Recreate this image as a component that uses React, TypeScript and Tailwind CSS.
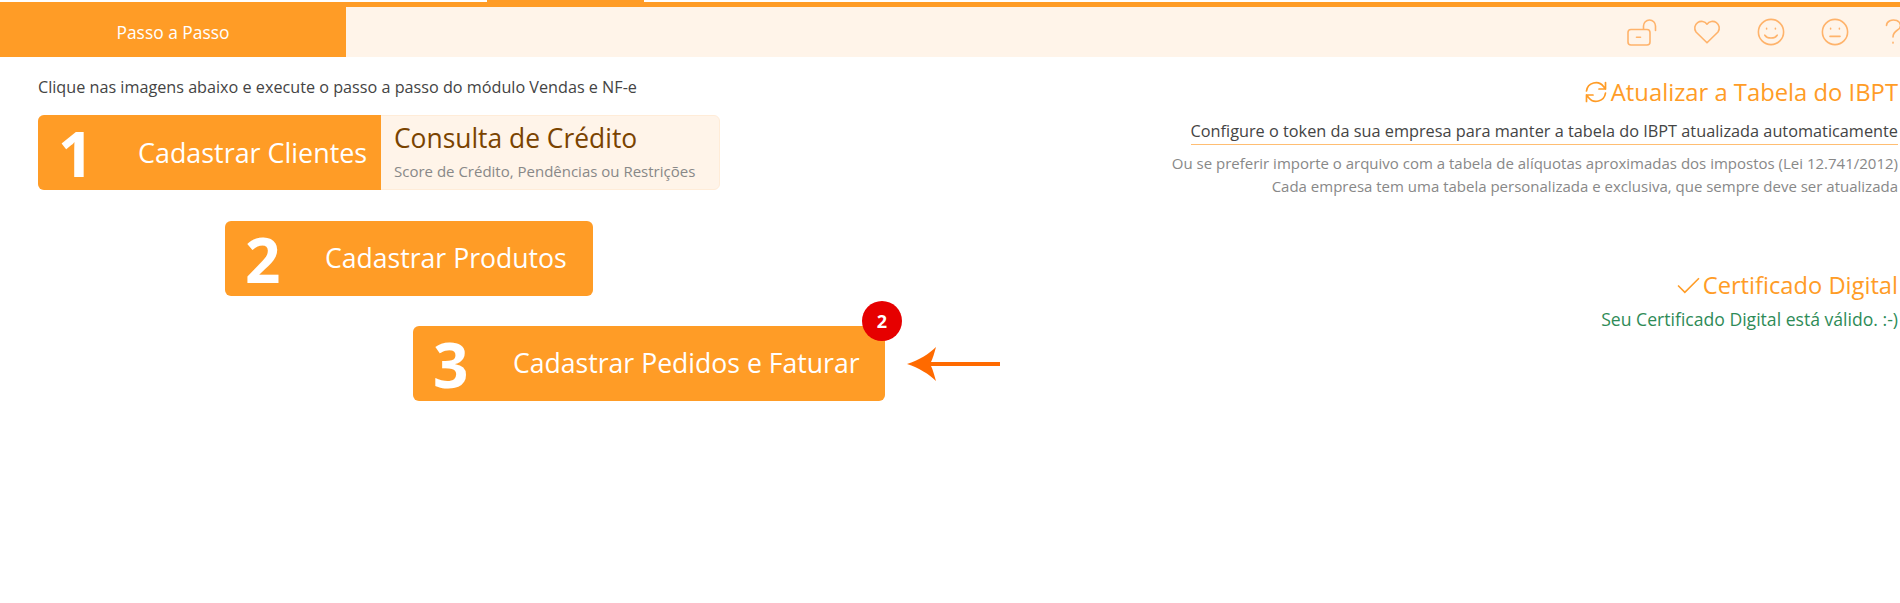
import React from "react";

function Step({ n, label, ml, width }: { n: string; label: string; ml: string; width: string }) {
  return (
    <div className={`relative flex h-[75px] items-center rounded-[6px] bg-[#ff9c26] text-white ${ml} ${width}`}>
      <span className="w-[100px] pl-[20px] text-[62px] font-bold leading-none">{n}</span>
      <span className="whitespace-nowrap text-[26.6px] font-medium leading-none">{label}</span>
    </div>
  );
}

const Stroke = { fill: "none", stroke: "#ffb36b", strokeWidth: 1.6, strokeLinecap: "round" as const, strokeLinejoin: "round" as const };

export default function App() {
  return (
    <div className="min-h-[603px] overflow-hidden bg-white font-['Open_Sans',sans-serif]">
      <div className="flex h-[7px] flex-col">
        <div className="flex h-[2px] bg-white">
          <div className="ml-[487px] h-[2px] w-[157px] bg-[#ff9c26]" />
        </div>
        <div className="h-[5px] bg-[#ff9c26]" />
      </div>
      <div className="flex h-[50px] items-center bg-[#fff4e9]">
        <div className="flex h-full w-[346px] items-center justify-center bg-[#ff9c26] text-[17.4px] text-white">Passo a Passo</div>
        <div className="ml-auto flex items-center gap-[36px]">
          <svg width="30" height="27" viewBox="0 0 30 27" {...Stroke}>
            <rect x="1" y="10.5" width="22" height="15.5" rx="3" />
            <path d="M9.5 18.3h4" />
            <path d="M16.5 10V7a6 6 0 0 1 12 0v4.5" />
          </svg>
          <svg width="28" height="24" viewBox="0 0 28 24" {...Stroke}>
            <path d="M14 22.8 3 12A6.6 6.6 0 0 1 14 4.2 6.6 6.6 0 0 1 25 12Z" />
          </svg>
          <svg width="28" height="28" viewBox="0 0 28 28" {...Stroke}>
            <circle cx="14" cy="14" r="12.6" />
            <path d="M9.6 10.4v.6M18.4 10.4v.6M7.8 17.2c2.8 3.8 9.6 3.8 12.4 0" />
          </svg>
          <svg width="28" height="28" viewBox="0 0 28 28" {...Stroke}>
            <circle cx="14" cy="14" r="12.6" />
            <path d="M9.6 10.4v.6M18.4 10.4v.6M9 18.4h10" />
          </svg>
          <svg width="15" height="26" viewBox="0 0 15 26" {...Stroke}>
            <path d="M1.5 6.5a7 5.5 0 1 1 11 4.5C9.5 13 8 14.5 8 18M8 23.3v.8" />
          </svg>
        </div>
      </div>

      <div className="flex justify-between">
        <div className="pl-[38px]">
          <p className="mt-[20px] whitespace-nowrap text-[16.2px] leading-[20px] text-[#444]">Clique nas imagens abaixo e execute o passo a passo do módulo Vendas e NF-e</p>
          <div className="mt-[18px] flex h-[75px] w-[682px] rounded-[6px] border border-[#ffecd8] bg-[#fff4e9]">
            <div className="-m-px flex h-[75px] w-[343px] items-center rounded-l-[6px] bg-[#ff9c26] text-white">
              <span className="w-[100px] pl-[20px] text-[62px] font-bold leading-none">1</span>
              <span className="whitespace-nowrap pt-[1px] text-[26.9px] font-medium leading-none">Cadastrar Clientes</span>
            </div>
            <div className="pl-[14px]">
              <div className="mt-[5px] text-[26.4px] leading-[34px] text-[#7a4300]">Consulta de Crédito</div>
              <div className="mt-[6px] text-[15px] leading-[20px] text-[#888]">Score de Crédito, Pendências ou Restrições</div>
            </div>
          </div>
          <div className="mt-[31px]">
            <Step n="2" label="Cadastrar Produtos" ml="ml-[187px]" width="w-[368px]" />
          </div>
          <div className="relative mt-[30px]">
            <Step n="3" label="Cadastrar Pedidos e Faturar" ml="ml-[375px]" width="w-[472px]" />
            <span className="absolute left-[824px] top-[-25px] flex h-[40px] w-[40px] items-center justify-center rounded-full bg-[#e60000] text-[18px] font-bold text-white">2</span>
            <svg className="absolute left-[869px] top-[19px]" width="94" height="38" viewBox="0 0 94 38" fill="#ff6a00">
              <path d="M0 19C12 15 22 9 29 2 27 9 26 13 24 17H93v4H24c2 4 3 8 5 15C22 29 12 23 0 19Z" />
            </svg>
          </div>
        </div>

        <div className="pr-[2px] text-right">
          <div className="mt-[18px] flex items-center justify-end whitespace-nowrap text-[23.8px] leading-[34px] text-[#ff9c26]">
            <svg className="mr-[3px]" width="24" height="24" viewBox="0 0 24 24" fill="none" stroke="#ff9c26" strokeWidth="1.7" strokeLinecap="round" strokeLinejoin="round">
              <path d="M2.5 11a9.5 9.5 0 0 1 17-4.5l2 2.5M21.5 2.5V9H15M21.5 13a9.5 9.5 0 0 1-17 4.5l-2-2.5M2.5 21.5V15H9" />
            </svg>
            Atualizar a Tabela do IBPT
          </div>
          <div className="mt-[10px] inline-block whitespace-nowrap border-b border-[#ffbe73] pb-[1px] text-[16.3px] leading-[24px] text-[#444]">Configure o token da sua empresa para manter a tabela do IBPT atualizada automaticamente</div>
          <div className="mt-[6px] whitespace-nowrap text-[15px] leading-[24px] text-[#888]">Ou se preferir importe o arquivo com a tabela de alíquotas aproximadas dos impostos (Lei 12.741/2012)</div>
          <div className="whitespace-nowrap text-[15px] leading-[23px] text-[#888]">Cada empresa tem uma tabela personalizada e exclusiva, que sempre deve ser atualizada</div>
          <div className="mt-[70px] flex items-center justify-end text-[23.7px] leading-[34px] text-[#ff9c26]">
            <svg className="mr-[3px]" width="23" height="17" viewBox="0 0 22 16" fill="none" stroke="#ff9c26" strokeWidth="1.5">
              <path d="M1 8l6.5 6.5L21 1" />
            </svg>
            Certificado Digital
          </div>
          <div className="mt-[5px] text-[17.6px] leading-[24px] text-[#2e8b57]">Seu Certificado Digital está válido. :-)</div>
        </div>
      </div>
    </div>
  );
}
